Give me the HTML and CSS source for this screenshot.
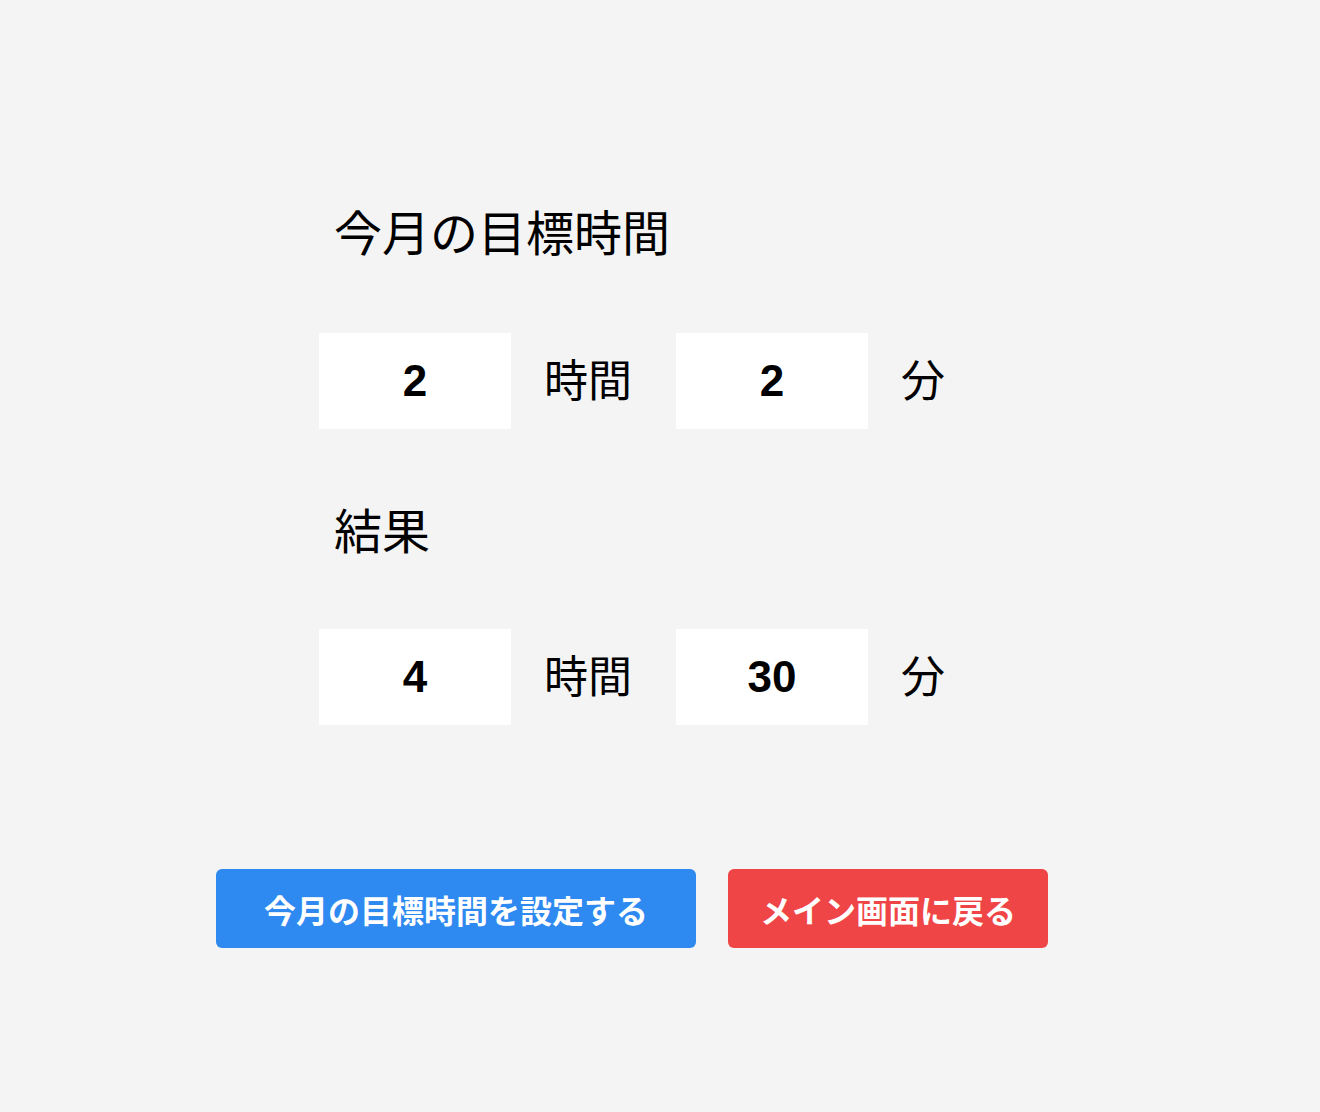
FILE: index.html
```html
<!DOCTYPE html>
<html lang="ja">
<head>
<meta charset="utf-8">
<title>今月の目標時間</title>
<link rel="stylesheet" href="styles.css">
</head>
<body>
<main class="page">
  <section class="form">
    <h2 class="heading">今月の目標時間</h2>
    <div class="time-row">
      <div class="box">2</div>
      <span class="unit unit-hour">時間</span>
      <div class="box">2</div>
      <span class="unit">分</span>
    </div>
    <h2 class="heading heading-result">結果</h2>
    <div class="time-row">
      <div class="box">4</div>
      <span class="unit unit-hour">時間</span>
      <div class="box">30</div>
      <span class="unit">分</span>
    </div>
  </section>
  <div class="actions">
    <button class="btn btn-primary">今月の目標時間を設定する</button>
    <button class="btn btn-danger">メイン画面に戻る</button>
  </div>
</main>
</body>
</html>
```

FILE: styles.css
```css
html, body {
  margin: 0;
  padding: 0;
  background: #f4f4f4;
}

body {
  font-family: "Noto Sans CJK JP", "Liberation Sans", sans-serif;
  color: #000;
  min-height: 1112px;
}

.page {
  padding: 198px 0 0 216px;
}

.form {
  margin-left: 103px;
  display: flex;
  flex-direction: column;
}

.heading {
  margin: 0;
  padding-left: 15px;
  font-size: 48px;
  font-weight: 400;
  line-height: 64px;
  height: 64px;
}

.heading-result {
  margin-top: 67px;
}

.time-row {
  display: flex;
  align-items: center;
  margin-top: 71px;
}

.box {
  width: 192px;
  height: 96px;
  background: #fff;
  display: flex;
  align-items: center;
  justify-content: center;
  font-family: "Liberation Sans", "Noto Sans CJK JP", sans-serif;
  font-weight: 700;
  font-size: 44px;
  line-height: 1;
}

.unit {
  font-size: 44px;
  line-height: 60px;
  margin-left: 33px;
  margin-top: -6px;
}

.unit-hour {
  margin-right: 44px;
}

.heading-result + .time-row {
  margin-top: 69px;
}

.actions {
  display: flex;
  gap: 32px;
  margin-top: 144px;
}

.btn {
  height: 79px;
  border: none;
  border-radius: 6px;
  color: #fff;
  font-family: "Noto Sans CJK JP", sans-serif;
  font-weight: 700;
  font-size: 32px;
  padding: 0;
  cursor: pointer;
}

.btn-primary {
  width: 480px;
  background: #2e89f0;
}

.btn-danger {
  width: 320px;
  background: #f04546;
}
```
